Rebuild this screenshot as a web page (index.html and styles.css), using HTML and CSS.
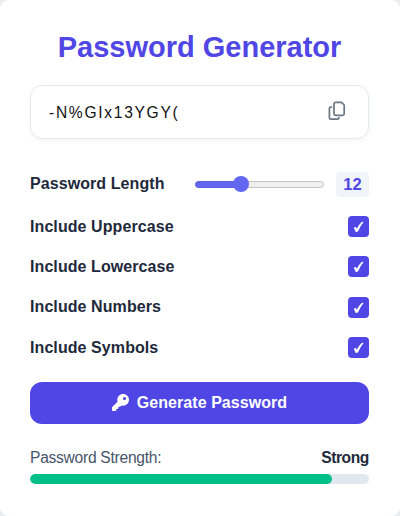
FILE: index.html
```html
<!DOCTYPE html>
<html lang="en">
<head>
<meta charset="utf-8">
<title>Password Generator</title>
<link rel="stylesheet" href="styles.css">
</head>
<body>
<main class="card">
  <h1 class="title">Password Generator</h1>
  <div class="output">
    <span class="password">-N%GIx13YGY(</span>
    <svg class="copy" viewBox="0 0 18 20" fill="none" stroke="#6b7785" stroke-width="1.7" stroke-linejoin="round">
      <path d="M7.6 1.300h5.900L16.200 4v8.800a1.600 1.600 0 0 1-1.600 1.600h-7A1.600 1.600 0 0 1 6 12.800V2.900a1.600 1.600 0 0 1 1.600-1.600z"/>
      <path d="M4.300 6H2.900a1.500 1.500 0 0 0-1.500 1.500v9.200a1.500 1.500 0 0 0 1.500 1.500h6.500a1.500 1.500 0 0 0 1.500-1.500v-.800"/>
    </svg>
  </div>
  <div class="length">
    <span class="label">Password Length</span>
    <div class="slider"><div class="slider-fill"></div><div class="thumb"></div></div>
    <span class="value">12</span>
  </div>
  <div class="options">
    <div class="option"><span class="label">Include Uppercase</span><span class="check"><svg viewBox="0 0 21 21" fill="#fff"><path d="M5.800 12.200Q6.800 10.600 7.900 11.100L8.700 12.700Q11.300 8 13.700 5.900Q14.900 5.500 15.600 6Q12.500 9.600 10.200 15Q9 16.300 7.700 15.900Q6.800 13.600 5.800 12.200z"/></svg></span></div>
    <div class="option"><span class="label">Include Lowercase</span><span class="check"><svg viewBox="0 0 21 21" fill="#fff"><path d="M5.800 12.200Q6.800 10.600 7.900 11.100L8.700 12.700Q11.300 8 13.700 5.900Q14.900 5.500 15.600 6Q12.500 9.600 10.200 15Q9 16.300 7.700 15.900Q6.800 13.600 5.800 12.200z"/></svg></span></div>
    <div class="option"><span class="label">Include Numbers</span><span class="check"><svg viewBox="0 0 21 21" fill="#fff"><path d="M5.800 12.200Q6.800 10.600 7.900 11.100L8.700 12.700Q11.300 8 13.700 5.900Q14.900 5.500 15.600 6Q12.500 9.600 10.200 15Q9 16.300 7.700 15.900Q6.800 13.600 5.800 12.200z"/></svg></span></div>
    <div class="option"><span class="label">Include Symbols</span><span class="check"><svg viewBox="0 0 21 21" fill="#fff"><path d="M5.800 12.200Q6.800 10.600 7.900 11.100L8.700 12.700Q11.300 8 13.700 5.900Q14.900 5.500 15.600 6Q12.500 9.600 10.200 15Q9 16.300 7.700 15.900Q6.800 13.600 5.800 12.200z"/></svg></span></div>
  </div>
  <button class="generate">
    <svg class="key" viewBox="0 0 512 512" fill="#fff"><path d="M336 352c97.200 0 176-78.800 176-176S433.200 0 336 0S160 78.800 160 176c0 18.700 2.900 36.800 8.300 53.700L7 391c-4.500 4.500-7 10.600-7 17v80c0 13.300 10.700 24 24 24h80c13.300 0 24-10.700 24-24v-40h40c13.300 0 24-10.700 24-24v-40h40c6.400 0 12.500-2.500 17-7l33.300-33.300c16.900 5.400 35 8.300 53.700 8.300zM376 88a48 48 0 1 1 0 96 48 48 0 1 1 0-96z"/></svg>
    <span>Generate Password</span>
  </button>
  <div class="strength"><span class="strength-label">Password Strength:</span><strong class="level">Strong</strong></div>
  <div class="meter"><div class="meter-fill"></div></div>
</main>
</body>
</html>
```
FILE: styles.css
```css
* { box-sizing: border-box; }
body {
  margin: 0;
  background: #e9edf1;
  font-family: "Liberation Sans", Arial, sans-serif;
  color: #1e293b;
}
.card {
  height: 516px;
  padding: 30px 31px 0 30px;
  background: #fff;
  border-radius: 9px;
}
.title {
  margin: 0 0 21px;
  height: 34px;
  line-height: 34px;
  font-size: 29px;
  text-align: center;
  color: #4f46e5;
  white-space: nowrap;
}
.output {
  display: flex;
  align-items: center;
  justify-content: space-between;
  height: 54px;
  padding: 0 22px 0 18px;
  border: 1px solid #e2e8f0;
  border-radius: 12px;
  box-shadow: 0 2px 5px rgba(0, 0, 0, .04);
}
.password {
  margin-top: 2px;
  font-size: 15.600px;
  letter-spacing: 1.700px;
  color: #111;
}
.copy {
  width: 18px;
  height: 20px;
  margin-bottom: 3px;
}
.length {
  display: flex;
  align-items: center;
  height: 26px;
  margin-top: 32px;
}
.label {
  font-size: 16px;
  line-height: 20px;
  font-weight: 700;
  letter-spacing: .08px;
}
.length .label { width: 165px; }
.slider {
  display: flex;
  align-items: center;
  width: 129px;
  height: 7px;
  background: #efefef;
  border: 1px solid #c4c4c4;
  border-radius: 4px;
}
.slider-fill {
  flex: none;
  width: 44px;
  height: 7px;
  margin-left: -1px;
  border-radius: 4px 0 0 4px;
  background: #6366f1;
  border: 1px solid #5b5ee0;
}
.thumb {
  flex: none;
  width: 16px;
  height: 16px;
  margin-left: -6px;
  border-radius: 50%;
  background: #6366f1;
}
.value {
  width: 33px;
  height: 25px;
  margin-left: auto;
  border-radius: 4px;
  background: #f1f5f9;
  color: #4f46e5;
  font-size: 16.500px;
  font-weight: 700;
  line-height: 24px;
  text-align: center;
}
.options {
  display: grid;
  grid-template-rows: repeat(4, 40.300px);
  margin-top: 9.500px;
}
.option {
  display: flex;
  align-items: center;
  justify-content: space-between;
}
.check {
  width: 21px;
  height: 21px;
  border-radius: 4px;
  background: #4f46e5;
}
.check svg {
  display: block;
  width: 21px;
  height: 21px;
}
.generate {
  display: flex;
  align-items: center;
  justify-content: center;
  gap: 8px;
  width: 100%;
  height: 42px;
  margin-top: 14.300px;
  padding: 0;
  border: 0;
  border-radius: 12px;
  background: #4f46e5;
  color: #fff;
  font: 700 16px/20px "Liberation Sans", Arial, sans-serif;
  letter-spacing: .06px;
}
.key { width: 17px; height: 17px; }
.strength {
  display: flex;
  justify-content: space-between;
  height: 18px;
  margin-top: 25px;
  font-size: 15.600px;
  line-height: 18px;
  color: #475569;
}
.strength-label { letter-spacing: -.270px; }
.level {
  font-size: 15.600px;
  letter-spacing: -.400px;
  color: #1e293b;
}
.meter {
  height: 10px;
  margin-top: 7px;
  overflow: hidden;
  border-radius: 5px;
  background: #e2e8f0;
}
.meter-fill {
  width: 89%;
  height: 10px;
  border-radius: 5px;
  background: #00bf87;
}
```
